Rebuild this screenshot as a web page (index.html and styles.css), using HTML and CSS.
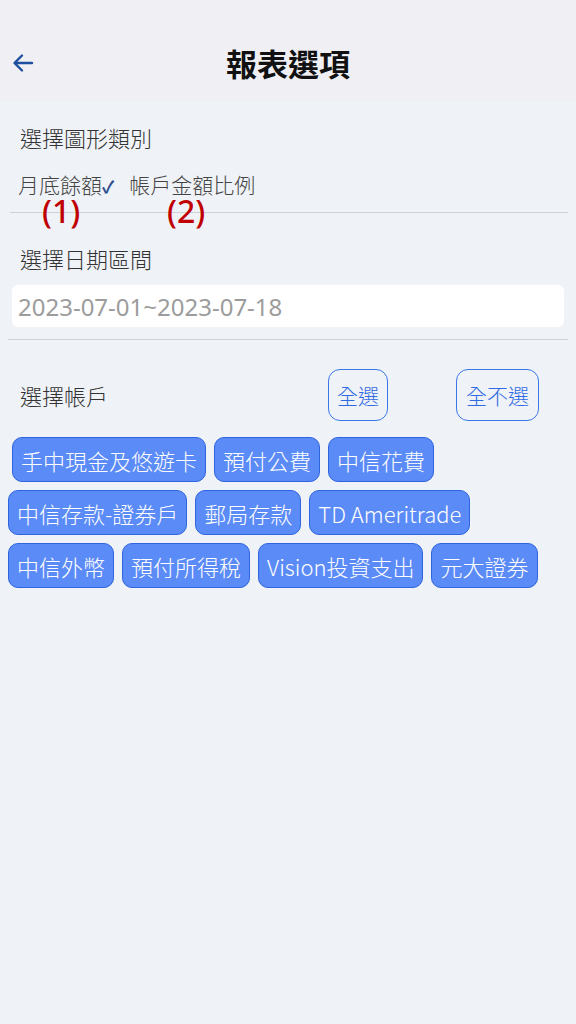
FILE: index.html
```html
<!DOCTYPE html>
<html lang="zh-Hant">
<head>
<meta charset="utf-8">
<title>報表選項</title>
<link rel="stylesheet" href="styles.css">
</head>
<body>
<div class="app">
  <header class="topbar">
    <button class="back" aria-label="返回">
      <svg width="24" height="24" viewBox="0 0 24 24"><path d="M21 12H4M11 4.5L3.5 12L11 19.5" fill="none" stroke="#1f4f9f" stroke-width="2.4" stroke-linecap="round" stroke-linejoin="round"/></svg>
    </button>
    <h1 class="title">報表選項</h1>
  </header>

  <main class="content">
    <section class="section chart-section">
      <div class="label">選擇圖形類別</div>
      <div class="options">
        <div class="option selected">月底餘額<span class="check">✓</span></div>
        <div class="option">帳戶金額比例</div>
        <span class="note note-1">(1)</span>
        <span class="note note-2">(2)</span>
      </div>
    </section>
    <hr class="divider divider-1">

    <section class="section date-section">
      <div class="label">選擇日期區間</div>
      <div class="date-input">2023-07-01~2023-07-18</div>
    </section>
    <hr class="divider divider-2">

    <section class="section account-section">
      <div class="account-row">
        <div class="label account-label">選擇帳戶</div>
        <button class="outline-btn btn-all">全選</button>
        <button class="outline-btn btn-none">全不選</button>
      </div>
      <div class="tags">
        <span class="tag tag-first">手中現金及悠遊卡</span>
        <span class="tag">預付公費</span>
        <span class="tag">中信花費</span>
        <span class="tag">中信存款-證券戶</span>
        <span class="tag">郵局存款</span>
        <span class="tag">TD Ameritrade</span>
        <span class="tag">中信外幣</span>
        <span class="tag">預付所得稅</span>
        <span class="tag">Vision投資支出</span>
        <span class="tag">元大證券</span>
      </div>
    </section>
  </main>
</div>
</body>
</html>
```

FILE: styles.css
```css
* { box-sizing: border-box; }
html, body {
  margin: 0;
  padding: 0;
  width: 576px;
  height: 1024px;
  overflow: hidden;
}
body {
  font-family: "Noto Sans CJK TC", "Noto Sans", sans-serif;
  font-weight: 300;
  background: #eff2f6;
  color: #333;
}
.app {
  display: flex;
  flex-direction: column;
  height: 1024px;
}
.topbar {
  height: 102px;
  background: #f0eff4;
  display: flex;
  align-items: center;
  justify-content: center;
  padding-top: 24px;
  position: relative;
}
.back {
  position: absolute;
  left: 10px;
  top: 50px;
  width: 26px;
  height: 26px;
  padding: 0;
  border: none;
  background: none;
  display: flex;
  align-items: center;
  justify-content: center;
}
.title {
  margin: 0;
  font-size: 31px;
  font-weight: 700;
  color: #111;
  line-height: 40px;
}
.content {
  flex: 1;
  background: #eff2f6;
}
.section { padding: 0; }
.label {
  font-size: 22px;
  line-height: 30px;
  color: #333;
  padding-left: 20px;
}
.chart-section { padding-top: 20px; }
.options {
  position: relative;
  display: flex;
  margin-top: 20px;
  padding-left: 18px;
  height: 24px;
  font-size: 21px;
  line-height: 24px;
  color: #444;
}
.option { white-space: nowrap; }
.selected { margin-right: 15px; }
.check {
  color: #2b4f8f;
  font-size: 17px;
  font-weight: 700;
  margin-left: 0;
}
.note {
  position: absolute;
  top: 24px;
  font-family: "Noto Sans", sans-serif;
  font-size: 32px;
  font-weight: 500;
  line-height: 30px;
  color: #c00000;
}
.note-1 { left: 42px; }
.note-2 { left: 167px; }
.divider {
  border: none;
  height: 1px;
  background: #cfd1d4;
  margin: 0;
}
.divider-1 { margin: 16px 8px 0 10px; }
.divider-2 { margin: 12px 8px 0 8px; }
.date-section { padding-top: 30px; }
.date-input {
  margin: 12px 12px 0 12px;
  height: 42px;
  background: #fff;
  border-radius: 6px;
  padding-left: 6px;
  display: flex;
  align-items: center;
  font-family: "Noto Sans", sans-serif;
  font-weight: 400;
  font-size: 24px;
  color: #9c9c9c;
}
.account-section { padding-top: 29px; }
.account-row {
  display: flex;
  align-items: center;
  height: 52px;
}
.account-label { width: 328px; }
.outline-btn {
  height: 52px;
  border: 1px solid #3a76e6;
  border-radius: 12px;
  background: transparent;
  color: #2f6ae3;
  font-family: "Noto Sans CJK TC", sans-serif;
  font-weight: 300;
  font-size: 21px;
  padding: 0;
}
.btn-all { width: 60px; margin-right: 68px; }
.btn-none { width: 83px; }
.tags {
  display: flex;
  flex-wrap: wrap;
  gap: 8px;
  padding: 16px 8px 0 8px;
}
.tag {
  height: 45px;
  display: inline-flex;
  align-items: center;
  padding: 0 8px;
  background: #5b8bf6;
  border: 1px solid #2e64df;
  border-radius: 10px;
  color: #fff;
  font-size: 22px;
  white-space: nowrap;
}
.tag-first { margin-left: 4px; }
```
